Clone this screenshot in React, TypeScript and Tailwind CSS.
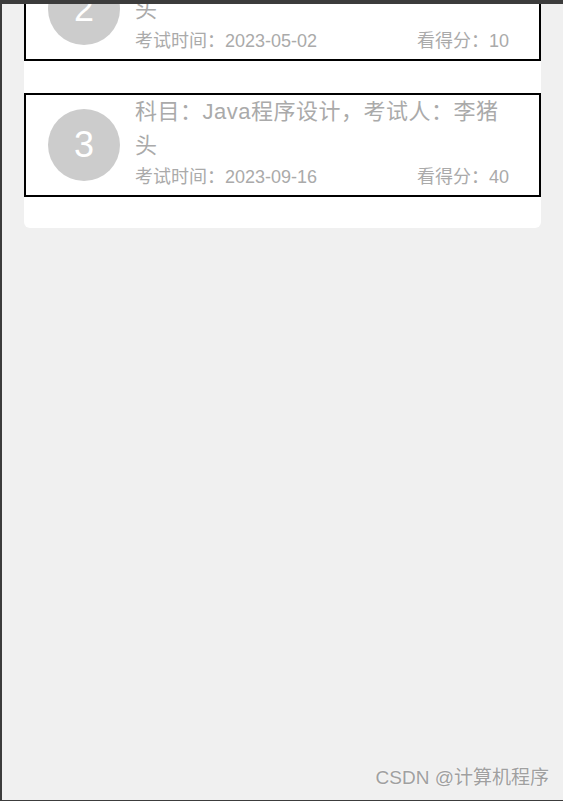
import React from "react";

type Exam = {
  id: number;
  subject: string;
  name: string;
  date: string;
  score: number;
};

const exams: Exam[] = [
  { id: 2, subject: "Java程序设计", name: "李猪头", date: "2023-05-02", score: 10 },
  { id: 3, subject: "Java程序设计", name: "李猪头", date: "2023-09-16", score: 40 },
];

const font = "font-['Liberation_Sans','Noto_Sans_CJK_SC',sans-serif]";

function ExamItem({ exam }: { exam: Exam }) {
  return (
    <div className="flex h-[104px] items-center border-2 border-black pl-[22px]">
      {/* Number badge */}
      <div className="flex h-[72px] w-[72px] shrink-0 items-center justify-center rounded-full bg-[#cccccc] text-[36px] text-white">
        {exam.id}
      </div>

      {/* Info */}
      <div className="ml-[15px] w-[374px] pb-[4px] text-[#aaaaaa]">
        <p className="pr-[4px] text-[22px] leading-[34px] tracking-[0.5px]">
          科目：{exam.subject}，考试人：{exam.name}
        </p>
        <div className="flex justify-between text-[18px] leading-[28px]">
          <span>考试时间：{exam.date}</span>
          <span>看得分：{exam.score}</span>
        </div>
      </div>
    </div>
  );
}

export default function App() {
  return (
    <div
      className={`relative h-[801px] w-[563px] overflow-hidden border-t-4 border-b border-l-2 border-[#3c3c3c] bg-[#f0f0f0] ${font}`}
    >
      <div className="mx-[22px] mt-[-47px] flex flex-col gap-8 rounded-md bg-white pb-[31px]">
        {exams.map((exam) => (
          <ExamItem key={exam.id} exam={exam} />
        ))}
      </div>

      {/* Watermark */}
      <span className="absolute right-[14px] bottom-[8px] text-[19px] text-[#a0a0a0] [text-shadow:0_0_2px_#ffffff]">
        CSDN @计算机程序
      </span>
    </div>
  );
}
